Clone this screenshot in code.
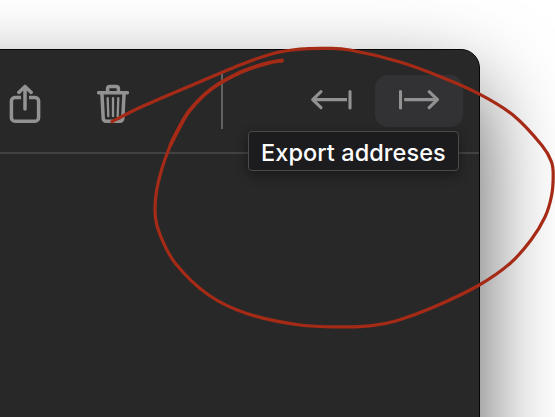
<script>
  // Freehand annotation, sampled along the pen's direction of travel.
  const head = [[282, 60.5], [266.7, 63.3], [241.7, 71.8], [211.7, 88.7], [190, 110], [178, 130], [170.5, 145]];
  const loop = [
    [178, 130], [170.5, 145], [161.5, 170], [156, 195], [155.5, 218], [160.5, 236], [175.5, 263.5], [208.3, 294.8],
    [246.7, 313.5], [300, 325], [343.3, 326.8], [371.7, 325.6], [396.7, 320.7], [433.3, 307.3],
    [479.3, 285], [510, 263.5], [531, 240], [545, 217], [551.5, 196], [553.2, 176], [551.5, 162],
    [542, 145.5], [513, 115], [480, 94.3], [443, 77.7], [400, 62], [350, 50], [325, 48.4],
    [300, 49.2], [273.3, 53.5], [240, 64.9], [190, 86], [140, 107.5], [112, 121.7]
  ];

  function smooth(points) {
    let d = `M${points[0][0]} ${points[0][1]}`;
    for (let i = 0; i < points.length - 1; i++) {
      const a = points[i - 1] ?? points[i];
      const b = points[i];
      const c = points[i + 1];
      const e = points[i + 2] ?? c;
      d += `C${b[0] + (c[0] - a[0]) / 6} ${b[1] + (c[1] - a[1]) / 6} ${c[0] - (e[0] - b[0]) / 6} ${c[1] - (e[1] - b[1]) / 6} ${c[0]} ${c[1]}`;
    }
    return d;
  }
</script>

<div class="desktop">
  <main class="window">
    <header class="toolbar">
      <button class="share" aria-label="Share">
        <svg width="32" height="40" viewBox="0 0 32 40">
          <path d="M12 13.4H6A3.6 3.6 0 0 0 2.4 17v16.5A3.6 3.6 0 0 0 6 37.2h20a3.6 3.6 0 0 0 3.6-3.7V17a3.6 3.6 0 0 0-3.6-3.6h-6" stroke-linecap="butt" />
          <path d="M16 25V3M9.8 8.4 16 2.4l6.2 6" />
        </svg>
      </button>
      <button class="trash" aria-label="Delete">
        <svg width="32" height="40" viewBox="0 0 32 40">
          <path d="M1.6 8.7h28.8" />
          <path d="M10.6 8V4.6a2.2 2.2 0 0 1 2.2-2.2h6.4a2.2 2.2 0 0 1 2.2 2.2V8" />
          <path d="m4.9 9 1.3 25.4a2.9 2.9 0 0 0 2.9 2.8h13.8a2.9 2.9 0 0 0 2.9-2.8L27.1 9" />
          <path class="ribs" d="m10.7 14.2.6 18M16 14.2v18M21.3 14.2l-.6 18" />
        </svg>
      </button>
      <div class="divider"></div>
      <button class="import" aria-label="Import addresses">
        <svg width="42" height="22" viewBox="0 0 42 22">
          <path d="M37 10.6H2.7" stroke-linecap="butt" />
          <path d="m11 2.7-8.3 7.9 8.3 8M40 2.5v16.4" />
        </svg>
      </button>
      <div class="export-group">
        <button class="export" aria-label="Export">
          <svg width="42" height="22" viewBox="0 0 42 22">
            <path d="M5.2 10.6h33.3" stroke-linecap="butt" />
            <path d="m30.2 2.7 8.3 7.9-8.3 8M1.5 2.5v16.4" />
          </svg>
        </button>
        <div class="tooltip" role="tooltip"><span>Export addreses</span></div>
      </div>
    </header>
  </main>
  <svg class="annotation" width="555" height="417" viewBox="0 0 555 417">
    <path d={smooth(loop)} stroke-width="3.2" />
    <path d={smooth(head)} stroke-width="3.9" />
  </svg>
</div>

<style>
  .desktop {
    position: relative;
    box-sizing: border-box;
    width: 555px;
    height: 417px;
    padding-top: 49px;
    overflow: hidden;
    background: #fff;
  }
  .window {
    box-sizing: border-box;
    width: 780px;
    height: 700px;
    margin-left: -300px;
    border: 1px solid #050505;
    border-radius: 19px;
    background: #282828;
    box-shadow: 0 38px 86px rgba(0, 0, 0, 0.66);
  }
  .toolbar {
    display: flex;
    align-items: flex-start;
    box-sizing: border-box;
    height: 104px;
    padding-left: 308px;
    border-bottom: 2px solid #424242;
  }
  button {
    display: flex;
    align-items: flex-start;
    justify-content: flex-start;
    flex: none;
    margin: 0;
    padding: 0;
    border: 0;
    background: none;
    line-height: 0;
  }
  button svg {
    display: block;
    flex: none;
    fill: none;
    stroke: #929293;
    stroke-width: 3.1;
    stroke-linecap: round;
    stroke-linejoin: round;
  }
  .share svg, .trash svg { stroke-width: 3.5; }
  .ribs { stroke-width: 2.3; }
  .share { padding-top: 34px; }
  .trash { padding-top: 34px; margin-left: 56px; }
  .divider {
    flex: none;
    width: 2px;
    height: 56px;
    margin: 23px 0 0 92px;
    background: #626262;
  }
  .import { margin-left: 87px; padding-top: 39px; }
  .export-group { position: relative; margin: 25px 0 0 23px; }
  .export {
    box-sizing: border-box;
    width: 88px;
    height: 52px;
    padding: 14px 0 0 24px;
    border-radius: 13px;
    background: #323234;
  }
  .tooltip {
    position: absolute;
    top: 56px;
    right: 4px;
    box-sizing: border-box;
    width: 211px;
    height: 40px;
    padding-left: 12px;
    border: 1px solid #4b4b4c;
    border-radius: 4px;
    background: #1c1c1e;
    box-shadow: 0 4px 12px rgba(0, 0, 0, 0.4);
    color: #fff;
    font: 500 23.5px/42px Inter, "Liberation Sans", sans-serif;
    letter-spacing: 0.07px;
    white-space: nowrap;
  }
  .annotation {
    position: absolute;
    inset: 0;
    fill: none;
    stroke: #a62b17;
    stroke-linecap: round;
    stroke-linejoin: round;
    pointer-events: none;
  }
</style>
